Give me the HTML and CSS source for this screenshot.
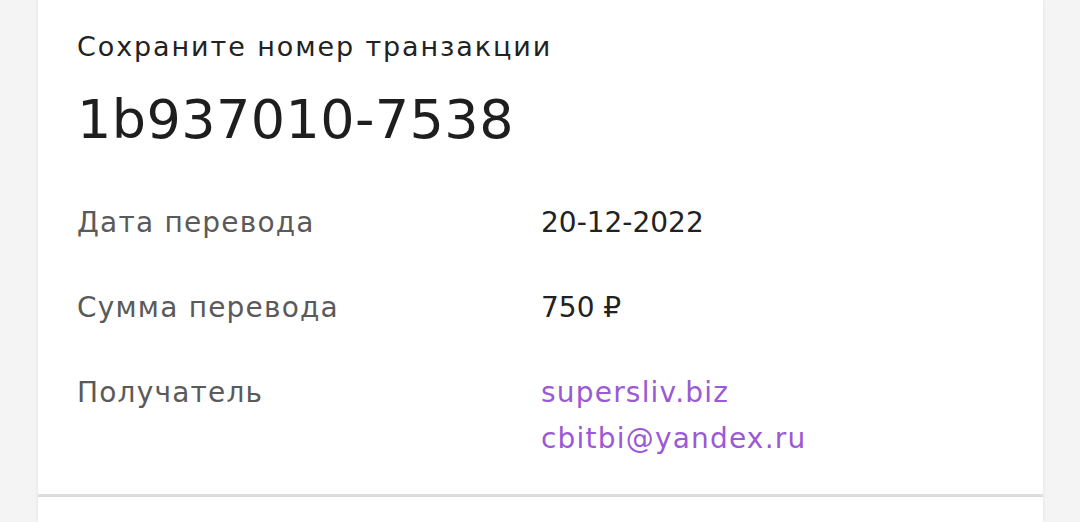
FILE: index.html
```html
<!DOCTYPE html>
<html lang="ru">
<head>
    <meta charset="UTF-8">
    <meta name="viewport" content="width=device-width, initial-scale=1.0">
    <title>Перевод</title>
    <link rel="stylesheet" href="styles.css">
</head>
<body>

    <div class="card">
        <p class="caption">Сохраните номер транзакции</p>
        <h1 class="txn">1b937010-7538</h1>

        <div class="details">
            <div class="label">Дата перевода</div>
            <div class="value">20-12-2022</div>

            <div class="label">Сумма перевода</div>
            <div class="value">750 ₽</div>

            <div class="label">Получатель</div>
            <div class="value">
                <a href="#" class="link">supersliv.biz</a>
                <a href="#" class="link">cbitbi@yandex.ru</a>
            </div>
        </div>
    </div>

    <div class="card card-next"></div>

</body>
</html>
```

FILE: styles.css
```css
body {
    font-family: 'DejaVu Sans', sans-serif;
    background: #f4f4f4;
    margin: 0;
    padding: 0;
    color: #222;
}
.card {
    background: #fff;
    margin: 0 37px 0 38px;
    padding: 28px 39px 32px;
    box-shadow: 0 0 4px rgba(0, 0, 0, 0.08);
    border-bottom: 3px solid #e0e0e0;
}
.caption {
    margin: 0;
    font-size: 27px;
    line-height: 38px;
    letter-spacing: 1.9px;
    color: #222;
}
.txn {
    margin: 22px 0 0;
    font-size: 54px;
    font-weight: normal;
    line-height: 64px;
    letter-spacing: 0.4px;
    color: #1e1e1e;
}
.details {
    display: grid;
    grid-template-columns: 464px 1fr;
    row-gap: 39px;
    margin-top: 48px;
    font-size: 28px;
    line-height: 46px;
}
.label {
    color: #5a5a5a;
    letter-spacing: 1.2px;
}
.value {
    color: #222;
}
.link {
    display: block;
    color: #9b59d6;
    text-decoration: none;
    letter-spacing: 1.2px;
}
.card-next {
    padding: 0;
    height: 25px;
    border-bottom: none;
}
```
